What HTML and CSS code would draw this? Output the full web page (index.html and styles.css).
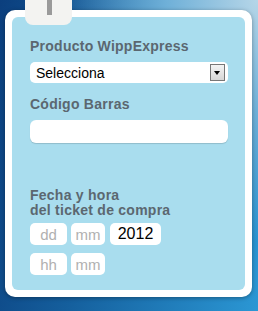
FILE: index.html
```html
<!DOCTYPE html>
<html lang="es">
<head>
    <meta name="viewport" content="width=device-width, initial-scale=1">
    <title>WippExpress - Ticket</title>
    <link rel="stylesheet" href="styles.css">
</head>
<body>
    <div class="tab"><span class="tab-num"></span></div>
    <div class="card">
        <form class="panel">
            <label class="lbl" for="producto">Producto WippExpress</label>
            <div class="select" id="producto">
                <span>Selecciona</span>
                <span class="arrow"></span>
            </div>
            <label class="lbl" for="codigo">Código Barras</label>
            <input type="text" id="codigo" class="field">
            <div class="lbl fecha">Fecha y hora<br>del ticket de compra</div>
            <div class="row">
                <input type="text" class="small" placeholder="dd">
                <input type="text" class="small" placeholder="mm">
                <input type="text" class="small year" value="2012">
            </div>
            <div class="row">
                <input type="text" class="small" placeholder="hh">
                <input type="text" class="small" placeholder="mm">
            </div>
        </form>
    </div>
</body>
</html>
```

FILE: styles.css
```css
html, body, input {
    font-family: "Liberation Sans", Arial, sans-serif;
}
html, body {
    margin: 0;
    padding: 0;
}
body {
    width: 258px;
    height: 311px;
    overflow: hidden;
    position: relative;
    background:
        radial-gradient(ellipse at 100% 0%, #b6d6e8 0%, #6fb0d8 25%, rgba(40, 130, 200, 0) 55%),
        linear-gradient(100deg, #0b3f7e 0%, #15609e 40%, #2b97d4 100%);
}
.tab {
    position: absolute;
    left: 25px;
    top: 0;
    width: 47px;
    height: 25px;
    background-color: #f3f3f1;
    border-radius: 0 0 8px 8px;
    z-index: 2;
}
.tab-num {
    position: absolute;
    left: 22px;
    top: 0;
    width: 5px;
    height: 15px;
    background-color: #9a9a9a;
}
.card {
    margin: 10px 0 0 5px;
    width: 247px;
    height: 287px;
    padding: 7px;
    box-sizing: border-box;
    background-color: #fff;
    border-radius: 10px;
    box-shadow: 0 1px 4px rgba(0, 0, 0, 0.35);
}
.panel {
    height: 100%;
    box-sizing: border-box;
    padding: 22px 17px 0 18px;
    background-color: #a9ddee;
    border-radius: 6px;
}
.lbl {
    display: block;
    font-size: 14px;
    font-weight: bold;
    letter-spacing: 0.25px;
    line-height: 15px;
    color: #5b6770;
    margin-bottom: 8px;
}
.select {
    display: flex;
    align-items: center;
    justify-content: space-between;
    height: 21px;
    padding: 0 3px 0 6px;
    margin-bottom: 14px;
    background-color: #fff;
    border-radius: 5px;
    font-size: 14px;
    color: #000;
}
.arrow {
    width: 13px;
    height: 15px;
    border: 1px solid #777;
    background: linear-gradient(#f4f4f4, #d6d6d6);
    position: relative;
}
.arrow::after {
    content: "";
    position: absolute;
    left: 3px;
    top: 6px;
    border-left: 3px solid transparent;
    border-right: 3px solid transparent;
    border-top: 4px solid #000;
}
.field {
    display: block;
    width: 198px;
    height: 23px;
    box-sizing: border-box;
    border: none;
    border-radius: 6px;
    background-color: #fff;
    box-shadow: 0 1px 1px rgba(0, 0, 0, 0.15);
    margin: 0 0 45px;
}
.fecha {
    line-height: 15px;
    margin-bottom: 5px;
}
.row {
    display: flex;
    gap: 4px;
    margin-bottom: 8px;
}
.small {
    width: 37px;
    height: 22px;
    box-sizing: border-box;
    border: none;
    border-radius: 5px;
    background-color: #fff;
    font-size: 15px;
    text-align: center;
    padding: 0;
    color: #000;
}
.small + .small {
    width: 34px;
}
.small.year {
    width: 51px;
    margin-left: 1px;
    font-size: 16px;
}
.small::placeholder {
    color: #b0b0b0;
}
```
